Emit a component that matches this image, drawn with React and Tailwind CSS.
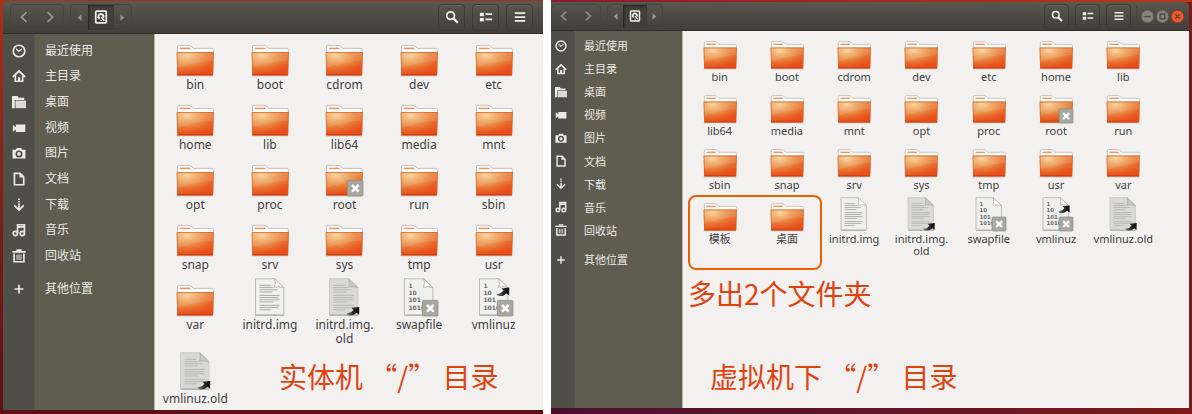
import { useState } from 'react';
import clsx from 'clsx';

const PLACES = [
  { name: '最近使用', icon: 'recent' },
  { name: '主目录', icon: 'home' },
  { name: '桌面', icon: 'desktop' },
  { name: '视频', icon: 'video' },
  { name: '图片', icon: 'camera' },
  { name: '文档', icon: 'document' },
  { name: '下载', icon: 'download' },
  { name: '音乐', icon: 'music' },
  { name: '回收站', icon: 'trash' },
];

const folder = (name, extra) => ({ name, type: 'folder', ...extra });

const ROOT_FOLDERS = [
  folder('bin'),
  folder('boot'),
  folder('cdrom'),
  folder('dev'),
  folder('etc'),
  folder('home'),
  folder('lib'),
  folder('lib64'),
  folder('media'),
  folder('mnt'),
  folder('opt'),
  folder('proc'),
  folder('root', { locked: true }),
  folder('run'),
  folder('sbin'),
  folder('snap'),
  folder('srv'),
  folder('sys'),
  folder('tmp'),
  folder('usr'),
  folder('var'),
];

const SYSTEM_FILES = [
  { name: 'initrd.img', type: 'text' },
  { name: 'initrd.img.\nold', type: 'text', dim: true, link: 'low' },
  { name: 'swapfile', type: 'binary', locked: true },
  { name: 'vmlinuz', type: 'binary', locked: true, link: 'high' },
  { name: 'vmlinuz.old', type: 'text', dim: true, link: 'low' },
];

const HOST_FILES = [...ROOT_FOLDERS, ...SYSTEM_FILES];
const GUEST_FILES = [...ROOT_FOLDERS, folder('模板'), folder('桌面'), ...SYSTEM_FILES];

// Two window densities, the guest window is a little smaller
const SIZES = {
  large: {
    bar: 'h-[33px] pl-[7px] pr-1',
    group: 'h-[27px]',
    navButton: 'w-[26px]',
    arrow: 'w-[17px]',
    current: 'w-[26px]',
    tool: 'size-[27px]',
    tools: 'gap-[7px]',
    glyph: 'size-[14px]',
    sidebar: 'w-[152px] pt-1 bg-[linear-gradient(to_right,#504f47_30px,#49483f_30px,#5f5c50_32px)] text-[12px]',
    list: 'h-[231px]',
    other: 'mt-[7px] h-[26px]',
    iconCell: 'w-[32px]',
    label: 'pl-[10px]',
    grid: 'grid-cols-5 gap-y-[6px] pl-[3px] pr-3',
    fileIcon: 'h-[38px]',
    fileLabel: 'mt-[2px] text-[12px] leading-[14px]',
  },
  small: {
    bar: 'h-[29px] pr-[5px]',
    group: 'h-[25px]',
    navButton: 'w-[24px]',
    arrow: 'w-[15px]',
    current: 'w-[24px]',
    tool: 'size-[25px]',
    tools: 'gap-[6px]',
    glyph: 'size-[12px]',
    sidebar: 'w-[132px] pt-[3px] bg-[linear-gradient(to_right,#504f47_22px,#49483f_22px,#5f5c50_24px)] text-[11px]',
    list: 'h-[208px]',
    other: 'mt-[6px] h-[23px]',
    iconCell: 'w-[20px]',
    label: 'pl-[13px]',
    grid: 'grid-cols-7 gap-y-[6px] pl-[3px] pr-8',
    fileIcon: 'h-[34px]',
    fileLabel: 'mt-[2px] text-[11px] leading-[12px]',
  },
};

function PlaceIcon({ name, className }) {
  const line = { fill: 'none', stroke: 'currentColor', strokeWidth: 1.9 };
  return (
    <svg viewBox="0 0 16 16" className={className} aria-hidden="true">
      {name === 'recent' && (
        <g {...line}>
          <circle cx="8" cy="8" r="6.6" />
          <path d="M4.8 5.4 7.6 8.4 11.4 5.6" strokeWidth="1.4" />
        </g>
      )}
      {name === 'home' && (
        <>
          <path d="M1 9 8 2.4 15 9" {...line} strokeWidth="2.2" />
          <path d="M3.8 7.4V14h8.4V7.4" {...line} />
          <path d="M6.8 9.4h2.6V14H6.8z" fill="currentColor" />
        </>
      )}
      {name === 'desktop' && (
        <>
          <path d="M0 1.2h6.4l1.2 2H14v2.4H3.2V15H0z" fill="currentColor" />
          <path d="M4 6.4h12V15H4z" fill="currentColor" fillOpacity=".9" />
        </>
      )}
      {name === 'video' && <path d="M1 4.4 4.4 7V4h10.8v8.6H4.4V9.8L1 12.2z" fill="currentColor" />}
      {name === 'camera' && (
        <>
          <path
            fillRule="evenodd"
            d="M.6 4.2h3.8l1.2-2h4.8l1.2 2h3.8v10H.6zM8 5a4 4 0 1 0 0 8 4 4 0 0 0 0-8z"
            fill="currentColor"
          />
          <circle cx="8" cy="9" r="2.1" fill="currentColor" />
        </>
      )}
      {name === 'document' && (
        <>
          <path d="M2.8 1.6h6.6l4 4v9H2.8z" {...line} />
          <path d="M8.6 1.4v5h5z" fill="currentColor" />
        </>
      )}
      {name === 'download' && (
        <>
          <path d="M7 .6h2v1.6H7zM7 3.4h2V5H7z" fill="currentColor" />
          <path d="M8 6.2v7.4M2.6 8.4 8 13.8l5.4-5.4" {...line} />
        </>
      )}
      {name === 'music' && (
        <g {...line}>
          <path d="M6.4 12V2h7.8v9.6M6.4 4.4h7.8" />
          <circle cx="3.8" cy="12" r="2.4" />
          <circle cx="11.8" cy="12" r="2.4" />
        </g>
      )}
      {name === 'trash' && (
        <g {...line}>
          <path d="M.4 3.2h15.2M5 1.2h6" />
          <path d="M2.4 5.2v9.4h11.2V5.2" />
          <path d="M5.8 6.4v6M8 6.4v6M10.2 6.4v6" strokeWidth="1.1" />
        </g>
      )}
      {name === 'plus' && <path d="M8 3v10M3 8h10" {...line} />}
    </svg>
  );
}

function BarIcon({ name, className }) {
  const line = { fill: 'none', stroke: 'currentColor', strokeWidth: 2 };
  return (
    <svg viewBox="0 0 16 16" className={className} aria-hidden="true">
      {name === 'back' && <path d="M10.8 2.4 5 8l5.8 5.6" {...line} />}
      {name === 'forward' && <path d="M5.2 2.4 11 8l-5.8 5.6" {...line} />}
      {name === 'left' && <path d="M11 3v10L5.4 8z" fill="currentColor" />}
      {name === 'right' && <path d="M5 3v10l5.6-5z" fill="currentColor" />}
      {name === 'disk' && (
        <>
          <rect x="2" y="1.2" width="12" height="13.6" rx="1.2" {...line} />
          <path d="M8 3.4A4 4 0 0 0 5.8 10.8L7.400 8.800A1.600 1.600 0 1 1 9.400 7.600L11.400 9.400A4 4 0 0 0 8 3.400z" fill="currentColor" />
          <path d="M8.400 8.400 11.800 12.400" stroke="currentColor" strokeWidth="1.800" />
          <path d="M7.400 12h1.800" stroke="currentColor" strokeWidth="1.200" />
        </>
      )}
      {name === 'search' && (
        <>
          <circle cx="6.4" cy="6.4" r="4.4" {...line} />
          <path d="m9.6 9.6 5 5" {...line} strokeWidth="2.6" />
        </>
      )}
      {name === 'list' && (
        <path
          d="M1 3h4.600v4H1zM1 9h4.600v4H1zM7.400 3.600H15v2H7.400zM7.400 9.800H15v2H7.400z"
          fill="currentColor"
        />
      )}
      {name === 'menu' && <path d="M2 3.6h12M2 8h12M2 12.4h12" {...line} />}
    </svg>
  );
}

function FolderPicture() {
  return (
    <g>
      <path d="M1.5 14V8.600q0-1.200 1.200-1.200H14.400l3.200 3H36q1.400 0 1.400 1.400V16h-36z" fill="#fcfcfc" stroke="#bdbbb8" strokeWidth=".9" />
      <path d="M3.800 10.400h10.600" stroke="#f0955b" strokeWidth="1.500" />
      <path d="M.6 37.800h36.600" stroke="#8c8a86" strokeOpacity=".5" />
      <path d="M.7 14h37l-.6 23.200H1.200z" fill="url(#folder-base)" />
      <path d="M.7 14h37l-.6 23.200H1.200z" fill="url(#folder-glow)" />
      <path d="M1.200 15h36l-.2 7.400Q19 23.600 1.400 30z" fill="#fff" fillOpacity=".1" />
      <path d="M1.200 14.500h36.200l-.7 22.300H1.700z" fill="none" stroke="#d2622b" strokeOpacity=".7" strokeWidth=".9" />
      <path d="M1.400 36.800h35.400" stroke="#c8380c" strokeWidth="1" />
    </g>
  );
}

function PagePicture({ binary, dim }) {
  return (
    <g>
      <path d="M4.500.8h19.400l9 8.800v27.800H4.500z" fill={dim ? '#d9d9d8' : '#f0f0ef'} stroke={dim ? '#c4c4c2' : '#b4b4b2'} strokeWidth=".9" />
      <path d="M5 37h27.600" stroke="#a4a4a2" strokeWidth="1" />
      <path d="M23.900.8q1 4.600-.4 8.400 4.600-1.200 9.400.4z" fill={dim ? '#c8c8c7' : '#fff'} stroke="#b0b0ae" strokeWidth=".9" />
      {binary ? (
        <g fill="#6c6c6b" fontSize="6" fontWeight="bold" fontFamily="'DejaVu Sans', sans-serif">
          <text x="8.400" y="10">1</text>
          <text x="8.400" y="17.200">10</text>
          <text x="8.400" y="24.400">101</text>
          <text x="8.400" y="31.600">1010</text>
        </g>
      ) : (
        <g stroke={dim ? '#b4b4b3' : '#a2a2a1'} strokeWidth=".9">
          <path d="M8.500 7.400h12M8.500 9.600h14M8.500 11.800h18M8.500 14h13" />
          <path d="M8.500 17.400h20M8.500 19.600h19M8.500 21.800h20M8.500 24h14" />
          <path d="M8.500 27.400h20M8.500 29.600h19M8.500 31.800h12" />
        </g>
      )}
    </g>
  );
}

function FileIcon({ file, className }) {
  return (
    <svg viewBox="0 0 38 38" className={clsx('aspect-square overflow-visible', className)} aria-hidden="true">
      {file.type === 'folder' ? <FolderPicture /> : <PagePicture binary={file.type === 'binary'} dim={file.dim} />}
      {file.link && (
        <path
          transform={file.link === 'low' ? 'translate(21.500 28.400)' : 'translate(21.500 9)'}
          d="M5 1.400 12.800.6l-.2 8-2.400-2.200Q6.200 10 1.600 8.800-.2 8 .2 6.400 3.800 7.600 7 3.600z"
          fill="url(#link-arrow)"
        />
      )}
      {file.locked && (
        <g>
          <rect x="22.400" y="22.400" width="15.600" height="15.600" rx="1" fill="#a6a89f" stroke="#8f9188" strokeWidth=".8" />
          <path d="m27 27 6.600 6.600m0-6.600L27 33.600" stroke="#fff" strokeWidth="2.500" />
        </g>
      )}
    </svg>
  );
}

function TitleBar({ s, controls }) {
  const box = 'flex items-center justify-center rounded-[4px] border border-[#3c3b35] shadow-[inset_0_1px_0_#65635a]';
  return (
    <header
      className={clsx(
        'flex items-center border-b border-[#2f2e29] bg-linear-to-b from-[#59574e] to-[#403f39] text-[#f0eee8]',
        controls ? 'rounded-tr-[5px]' : 'rounded-tl-[5px]',
        s.bar
      )}
    >
      <div className={clsx('flex rounded-[4px] border border-[#46453e]', s.group)}>
        <button type="button" aria-label="后退" className={clsx('flex items-center justify-center text-[#96948c]', s.navButton)}>
          <BarIcon name="back" className={s.glyph} />
        </button>
        <button type="button" aria-label="前进" className={clsx('flex items-center justify-center text-[#96948c]', s.navButton)}>
          <BarIcon name="forward" className={s.glyph} />
        </button>
      </div>
      <div className={clsx('ml-[6px] flex rounded-[4px] border border-[#46453e] text-[#96948c]', s.group)}>
        <button type="button" aria-label="上一级" className={clsx('flex items-center justify-center', s.arrow)}>
          <BarIcon name="left" className="size-[11px]" />
        </button>
        <button
          type="button"
          aria-label="计算机"
          className={clsx(
            'flex items-center justify-center bg-[#403f39] text-[#f0eee8] shadow-[inset_1px_1px_2px_#24231f]',
            s.current
          )}
        >
          <BarIcon name="disk" className={s.glyph} />
        </button>
        <button type="button" aria-label="下一级" className={clsx('flex items-center justify-center', s.arrow)}>
          <BarIcon name="right" className="size-[11px]" />
        </button>
      </div>

      <div className={clsx('ml-auto flex', s.tools)}>
        <button type="button" aria-label="搜索" className={clsx(box, s.tool)}>
          <BarIcon name="search" className={s.glyph} />
        </button>
        <button type="button" aria-label="列表视图" className={clsx(box, s.tool)}>
          <BarIcon name="list" className={s.glyph} />
        </button>
        <button type="button" aria-label="菜单" className={clsx(box, s.tool)}>
          <BarIcon name="menu" className={s.glyph} />
        </button>
      </div>
      <div className="ml-[5px] h-5 w-px bg-[#46453e]" />

      {controls && (
        <div className="ml-1 flex gap-[2px] text-[#45443e]">
          <button type="button" aria-label="最小化" className="size-[13px] rounded-full bg-[#85837a]">
            <svg viewBox="0 0 13 13" aria-hidden="true">
              <circle cx="6.500" cy="6.500" r="6.200" fill="none" stroke="#4a4942" strokeWidth=".6" />
              <path d="M3.500 6.500h6" stroke="currentColor" strokeWidth="1.200" />
            </svg>
          </button>
          <button type="button" aria-label="最大化" className="size-[13px] rounded-full bg-[#85837a]">
            <svg viewBox="0 0 13 13" aria-hidden="true">
              <circle cx="6.500" cy="6.500" r="6.200" fill="none" stroke="#4a4942" strokeWidth=".6" />
              <path d="M4.200 4.200h4.600v4.600H4.200z" fill="none" stroke="currentColor" strokeWidth="1.200" />
            </svg>
          </button>
          <button type="button" aria-label="关闭" className="size-[13px] rounded-full bg-[#f0582b]">
            <svg viewBox="0 0 13 13" aria-hidden="true">
              <circle cx="6.500" cy="6.500" r="6.200" fill="none" stroke="#6b2c18" strokeWidth=".6" />
              <path d="m4.400 4.400 4.200 4.200m0-4.200L4.400 8.600" stroke="currentColor" strokeWidth="1.300" />
            </svg>
          </button>
        </div>
      )}
    </header>
  );
}

function PlaceRow({ s, icon, children }) {
  return (
    <button type="button" className="flex h-full w-full items-center text-left">
      <span className={clsx('flex justify-center', s.iconCell)}>
        <PlaceIcon name={icon} className={s.glyph} />
      </span>
      <span className={clsx('leading-none', s.label)}>{children}</span>
    </button>
  );
}

function Sidebar({ s }) {
  return (
    <nav
      aria-label="位置"
      className={clsx('shrink-0 border-r border-[#b9b7b1] text-[#eceae4]', s.sidebar)}
    >
      <ul className={clsx('grid auto-rows-fr', s.list)}>
        {PLACES.map((place) => (
          <li key={place.name}>
            <PlaceRow s={s} icon={place.icon}>{place.name}</PlaceRow>
          </li>
        ))}
      </ul>
      <div className={s.other}>
        <PlaceRow s={s} icon="plus">其他位置</PlaceRow>
      </div>
    </nav>
  );
}

function FileWindow({ size, files, controls, highlight, children }) {
  const s = SIZES[size];
  const [selected, setSelected] = useState(null);

  return (
    <section className="flex min-w-0 flex-1 flex-col">
      <TitleBar s={s} controls={controls} />
      <div className="flex flex-1">
        <Sidebar s={s} />
        <main className="relative min-w-0 flex-1 bg-[#f2f1f0]">
          <ul className={clsx('relative grid content-start pt-1', s.grid)}>
            {files.map((file) => (
              <li key={file.name} className="min-w-0">
                <button
                  type="button"
                  onClick={() => setSelected(file.name)}
                  aria-pressed={selected === file.name}
                  className="flex w-full flex-col items-center focus-visible:outline-none"
                >
                  <FileIcon file={file} className={s.fileIcon} />
                  <span className={clsx('whitespace-pre text-center text-[#3f3f3f]', s.fileLabel)}>{file.name}</span>
                </button>
              </li>
            ))}
            {highlight && (
              <li
                aria-hidden="true"
                className="pointer-events-none absolute -right-px -top-[2px] left-[2px] col-start-1 col-end-3 row-start-4 row-end-5 h-[75px] rounded-[8px] border-2 border-[#eb6100]"
              />
            )}
          </ul>
          {children}
        </main>
      </div>
    </section>
  );
}

function Note({ className, children }) {
  return (
    <p className={clsx("absolute whitespace-pre font-['Noto_Sans_CJK_SC',sans-serif] text-[28px] leading-8 text-[#df4310]", className)}>
      {children}
    </p>
  );
}

export default function App() {
  return (
    <div className="grid min-h-screen grid-cols-[543fr_641fr] gap-2 bg-white font-['Noto_Sans','Noto_Sans_CJK_SC',sans-serif]">
      {/* Shared gradients for the file pictures */}
      <svg className="absolute size-0" aria-hidden="true">
        <defs>
          <linearGradient id="folder-base" x1="0" y1="0" x2=".3" y2="1">
            <stop offset="0" stopColor="#e89a55" />
            <stop offset=".5" stopColor="#e67a35" />
            <stop offset="1" stopColor="#e84f1a" />
          </linearGradient>
          <radialGradient id="folder-glow" cx=".28" cy=".15" r=".8">
            <stop offset="0" stopColor="#fbd9a0" stopOpacity=".9" />
            <stop offset=".55" stopColor="#eda057" stopOpacity=".5" />
            <stop offset="1" stopColor="#ea4a15" stopOpacity=".2" />
          </radialGradient>
          <linearGradient id="link-arrow">
            <stop offset="0" stopColor="#8a8a8a" />
            <stop offset=".5" stopColor="#2a2a2a" />
            <stop offset="1" stopColor="#0c0c0c" />
          </linearGradient>
        </defs>
      </svg>

      {/* Physical machine */}
      <div className="flex bg-linear-to-b from-[#a8301a] to-[#5a1014] pb-1 pl-[3px] pt-px">
        <FileWindow size="large" files={HOST_FILES}>
          <Note className="bottom-[18px] left-[124px]">实体机 “/” 目录</Note>
        </FileWindow>
      </div>

      {/* Virtual machine */}
      <div className="flex bg-[linear-gradient(to_right,#8a1a2a,#b5381a)]">
        <div className="mt-[2px] flex flex-1 bg-linear-to-r from-[#4a0f2e] to-[#7a1a1a] pb-[6px] pr-[3px]">
          <FileWindow size="small" files={GUEST_FILES} controls highlight>
            <Note className="left-[5px] top-[246px]">多出2个文件夹</Note>
            <Note className="bottom-4 left-[27px]">虚拟机下 “/” 目录</Note>
          </FileWindow>
        </div>
      </div>
    </div>
  );
}
